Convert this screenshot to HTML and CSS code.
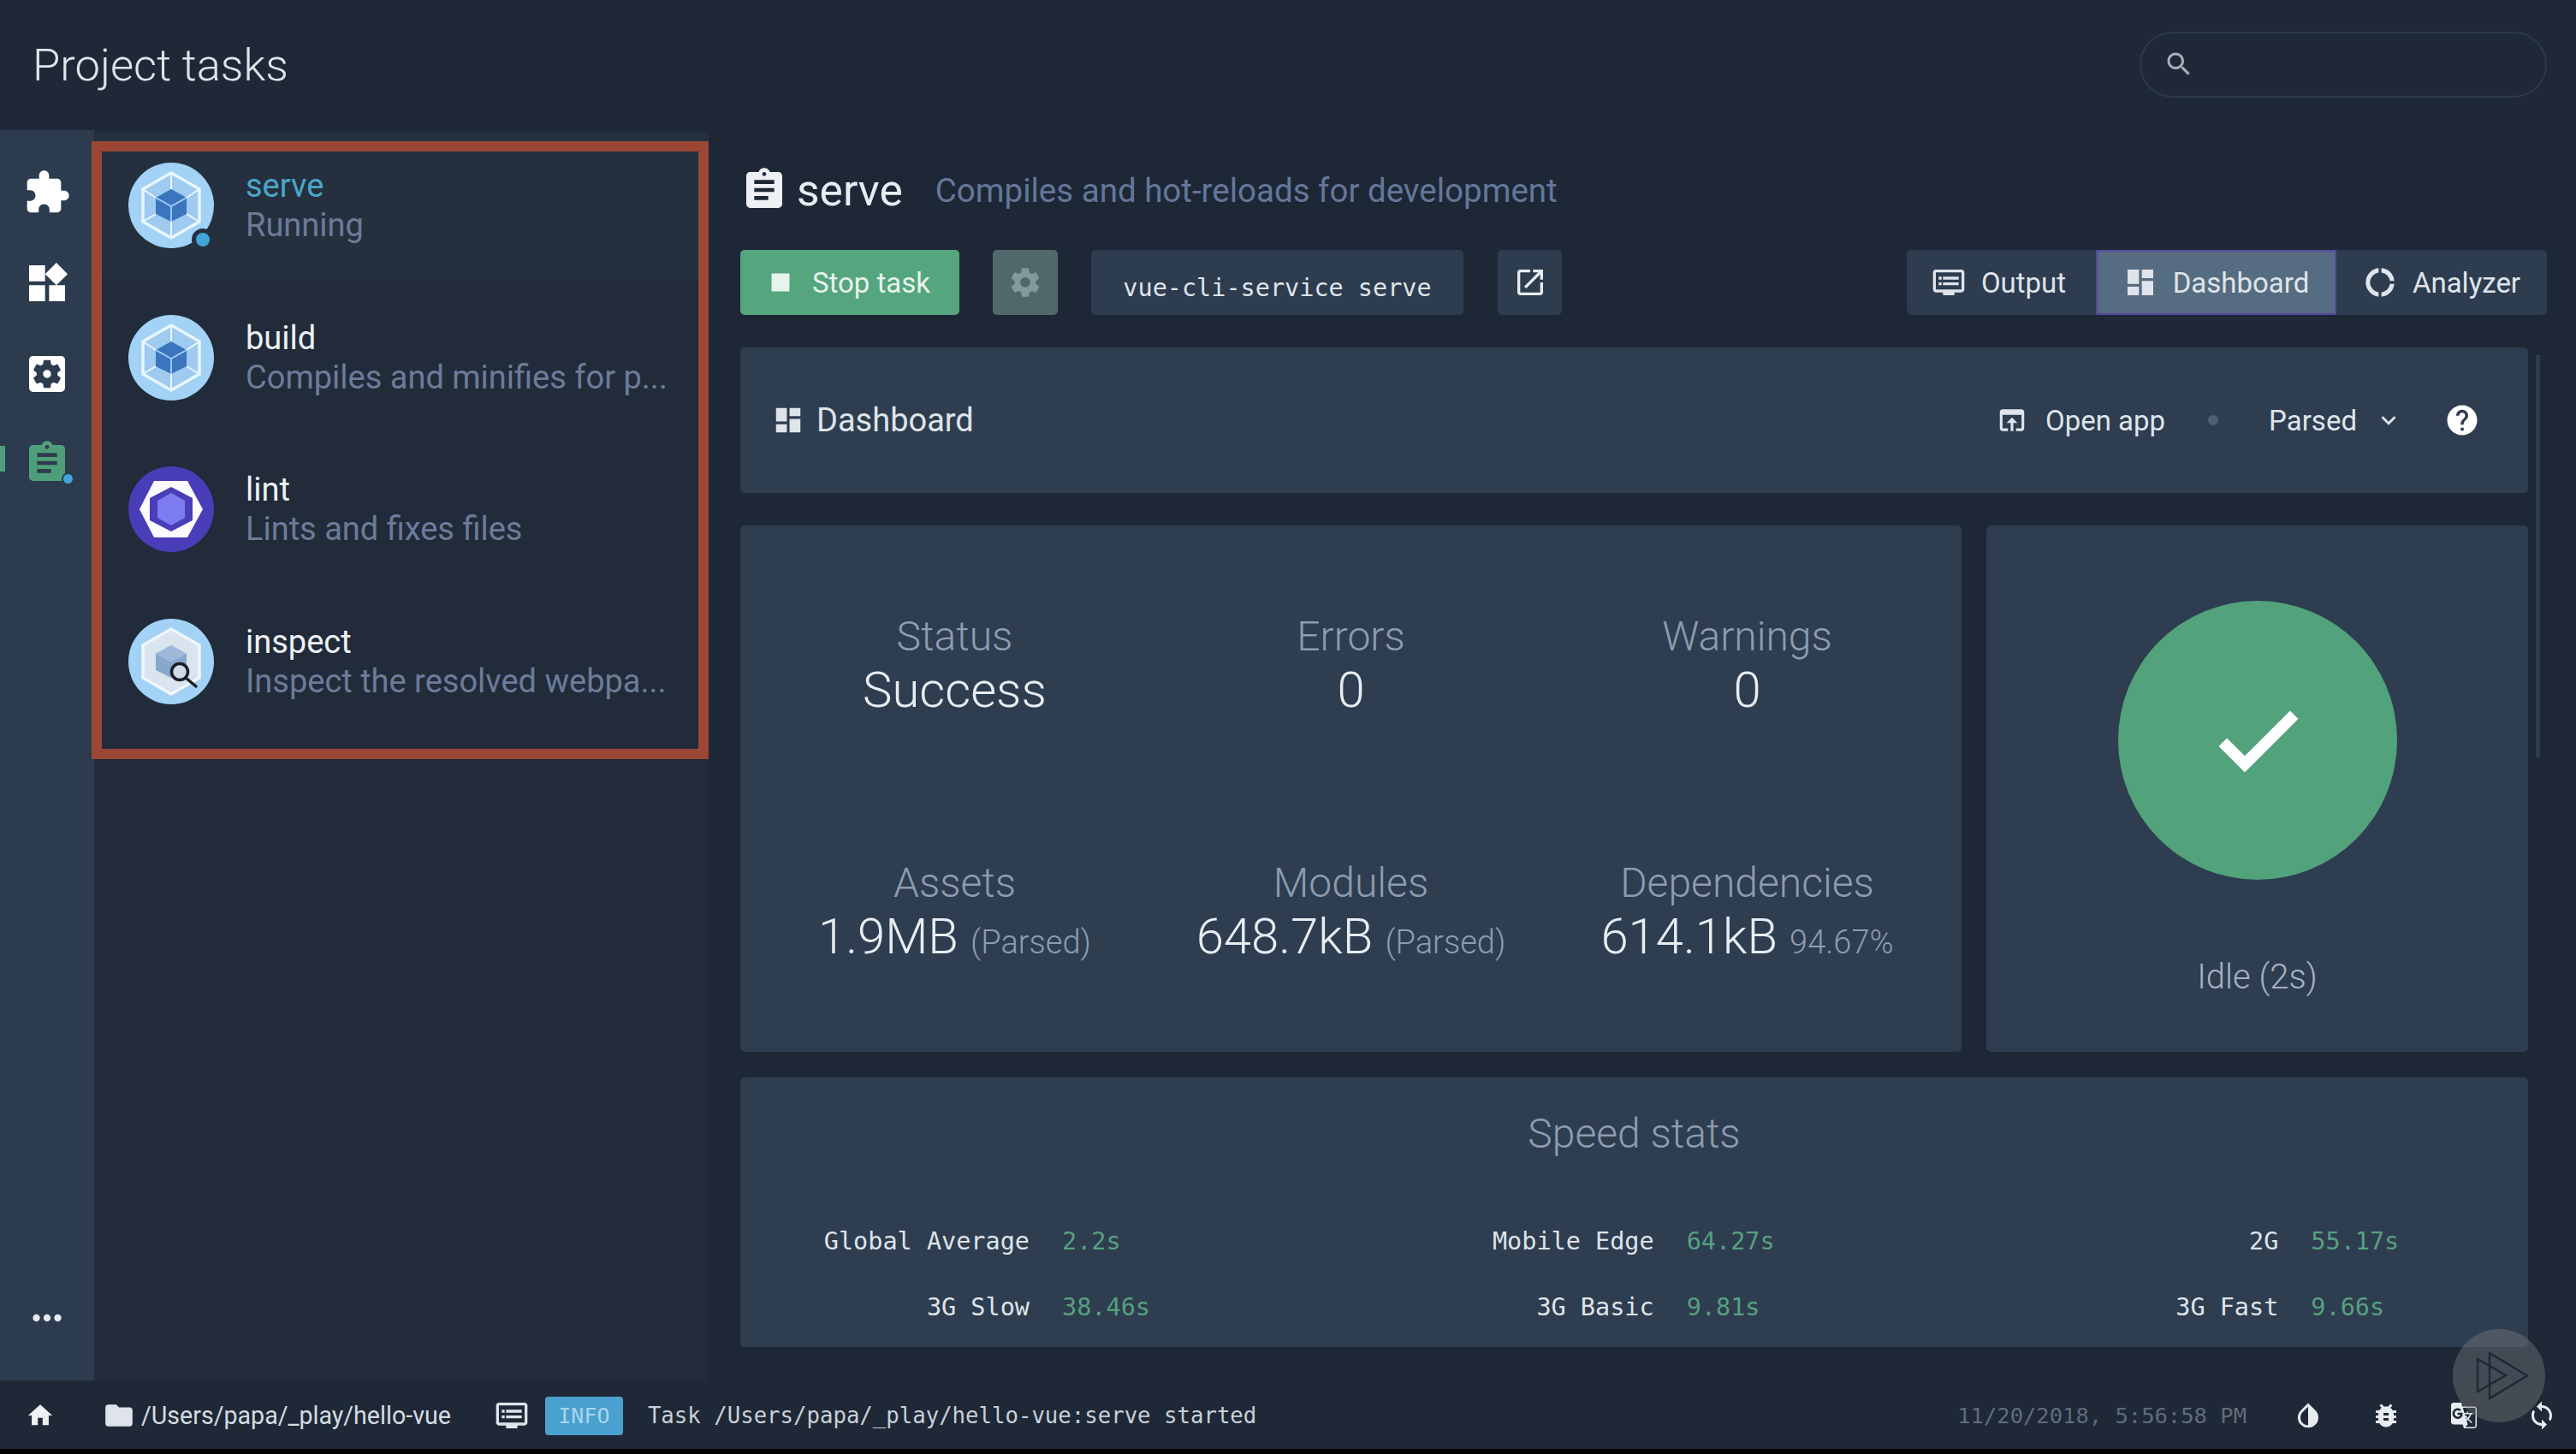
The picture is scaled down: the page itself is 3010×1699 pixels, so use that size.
FILE: index.html
```html
<!DOCTYPE html>
<html lang="en">
<head>
    <meta charset="UTF-8">
    <title>Project tasks</title>
    <link rel="stylesheet" href="styles.css">
</head>
<body>
    <svg class="sprite" xmlns="http://www.w3.org/2000/svg">
        <symbol id="i-extension" viewBox="0 0 24 24"><path d="M20.5 11H19V7c0-1.1-.9-2-2-2h-4V3.5C13 2.12 11.88 1 10.5 1S8 2.12 8 3.5V5H4c-1.1 0-1.99.9-1.99 2v3.8H3.5c1.49 0 2.7 1.21 2.7 2.7s-1.21 2.7-2.7 2.7H2V20c0 1.1.9 2 2 2h3.8v-1.5c0-1.49 1.21-2.7 2.7-2.7 1.49 0 2.7 1.21 2.7 2.7V22H17c1.1 0 2-.9 2-2v-4h1.5c1.38 0 2.5-1.12 2.5-2.5S21.88 11 20.5 11z"/></symbol>
        <symbol id="i-widgets" viewBox="0 0 24 24"><path d="M13 13v8h8v-8h-8zM3 21h8v-8H3v8zM3 3v8h8V3H3zm13.66-1.31L11 7.34 16.66 13l5.66-5.66-5.66-5.65z"/></symbol>
        <symbol id="i-settings-app" viewBox="0 0 24 24"><path d="M12 10c-1.1 0-2 .9-2 2s.9 2 2 2 2-.9 2-2-.9-2-2-2zm7-7H5c-1.11 0-2 .9-2 2v14c0 1.1.89 2 2 2h14c1.11 0 2-.9 2-2V5c0-1.1-.89-2-2-2zm-1.75 9c0 .23-.02.46-.05.68l1.48 1.16c.13.11.17.3.08.45l-1.4 2.42c-.09.15-.27.21-.43.15l-1.74-.7c-.36.28-.76.51-1.18.69l-.26 1.85c-.03.17-.18.3-.35.3h-2.8c-.17 0-.32-.13-.35-.29l-.26-1.85c-.43-.18-.82-.41-1.18-.69l-1.74.7c-.16.06-.34 0-.43-.15l-1.4-2.42c-.09-.15-.05-.34.08-.45l1.48-1.16c-.03-.23-.05-.46-.05-.69 0-.23.02-.46.05-.68l-1.48-1.16c-.13-.11-.17-.3-.08-.45l1.4-2.42c.09-.15.27-.21.43-.15l1.74.7c.36-.28.76-.51 1.18-.69l.26-1.85c.03-.17.18-.3.35-.3h2.8c.17 0 .32.13.35.29l.26 1.85c.43.18.82.41 1.18.69l1.74-.7c.16-.06.34 0 .43.15l1.4 2.42c.09.15.05.34-.08.45l-1.48 1.16c.03.23.05.46.05.69z"/></symbol>
        <symbol id="i-assignment" viewBox="0 0 24 24"><path d="M19 3h-4.18C14.4 1.84 13.3 1 12 1c-1.3 0-2.4.84-2.82 2H5c-1.1 0-2 .9-2 2v14c0 1.1.9 2 2 2h14c1.1 0 2-.9 2-2V5c0-1.1-.9-2-2-2zm-7 0c.55 0 1 .45 1 1s-.45 1-1 1-1-.45-1-1 .45-1 1-1zm2 14H7v-2h7v2zm3-4H7v-2h10v2zm0-4H7V7h10v2z"/></symbol>
        <symbol id="i-dashboard" viewBox="0 0 24 24"><path d="M3 13h8V3H3v10zm0 8h8v-6H3v6zm10 0h8V11h-8v10zm0-18v6h8V3h-8z"/></symbol>
        <symbol id="i-settings" viewBox="0 0 24 24"><path d="M19.43 12.98c.04-.32.07-.64.07-.98s-.03-.66-.07-.98l2.11-1.65c.19-.15.24-.42.12-.64l-2-3.46c-.12-.22-.39-.3-.61-.22l-2.49 1c-.52-.4-1.08-.73-1.69-.98l-.38-2.65C14.46 2.18 14.25 2 14 2h-4c-.25 0-.46.18-.49.42l-.38 2.65c-.61.25-1.17.59-1.69.98l-2.49-1c-.23-.09-.49 0-.61.22l-2 3.46c-.13.22-.07.49.12.64l2.11 1.65c-.04.32-.07.65-.07.98s.03.66.07.98l-2.11 1.65c-.19.15-.24.42-.12.64l2 3.46c.12.22.39.3.61.22l2.49-1c.52.4 1.08.73 1.69.98l.38 2.65c.03.24.24.42.49.42h4c.25 0 .46-.18.49-.42l.38-2.65c.61-.25 1.17-.59 1.69-.98l2.49 1c.23.09.49 0 .61-.22l2-3.46c.12-.22.07-.49-.12-.64l-2.11-1.65zM12 15.5c-1.93 0-3.5-1.57-3.5-3.5s1.57-3.5 3.5-3.5 3.5 1.57 3.5 3.5-1.57 3.5-3.5 3.5z"/></symbol>
        <symbol id="i-open" viewBox="0 0 24 24"><path d="M19 19H5V5h7V3H5c-1.11 0-2 .9-2 2v14c0 1.1.89 2 2 2h14c1.1 0 2-.9 2-2v-7h-2v7zM14 3v2h3.59l-9.83 9.83 1.41 1.41L19 6.41V10h2V3h-7z"/></symbol>
        <symbol id="i-search" viewBox="0 0 24 24"><path d="M15.5 14h-.79l-.28-.27C15.41 12.59 16 11.11 16 9.5 16 5.91 13.09 3 9.5 3S3 5.91 3 9.5 5.91 16 9.5 16c1.61 0 3.09-.59 4.23-1.57l.27.28v.79l5 4.99L20.49 19l-4.99-5zm-6 0C7.01 14 5 11.99 5 9.5S7.01 5 9.5 5 14 7.01 14 9.5 11.99 14 9.5 14z"/></symbol>
        <symbol id="i-browser" viewBox="0 0 24 24"><path d="M19 4H5c-1.11 0-2 .9-2 2v12c0 1.1.89 2 2 2h4v-2H5V8h14v10h-4v2h4c1.1 0 2-.9 2-2V6c0-1.1-.89-2-2-2zm-7 6l-4 4h3v6h2v-6h3l-4-4z"/></symbol>
        <symbol id="i-down" viewBox="0 0 24 24"><path d="M7.41 8.59L12 13.17l4.59-4.58L18 10l-6 6-6-6 1.41-1.41z"/></symbol>
        <symbol id="i-help" viewBox="0 0 24 24"><path d="M12 2C6.48 2 2 6.48 2 12s4.48 10 10 10 10-4.48 10-10S17.52 2 12 2zm1 17h-2v-2h2v2zm2.07-7.75l-.9.92C13.45 12.9 13 13.5 13 15h-2v-.5c0-1.1.45-2.1 1.17-2.83l1.24-1.26c.37-.36.59-.86.59-1.41 0-1.1-.9-2-2-2s-2 .9-2 2H8c0-2.21 1.79-4 4-4s4 1.79 4 4c0 .88-.36 1.68-.93 2.25z"/></symbol>
        <symbol id="i-check" viewBox="0 0 24 24"><path d="M9 16.17L4.83 12l-1.42 1.41L9 19 21 7l-1.41-1.41z"/></symbol>
        <symbol id="i-home" viewBox="0 0 24 24"><path d="M10 20v-6h4v6h5v-8h3L12 3 2 12h3v8z"/></symbol>
        <symbol id="i-folder" viewBox="0 0 24 24"><path d="M10 4H4c-1.1 0-1.99.9-1.99 2L2 18c0 1.1.9 2 2 2h16c1.1 0 2-.9 2-2V8c0-1.1-.9-2-2-2h-8l-2-2z"/></symbol>
        <symbol id="i-more" viewBox="0 0 24 24"><path d="M6 10c-1.1 0-2 .9-2 2s.9 2 2 2 2-.9 2-2-.9-2-2-2zm12 0c-1.1 0-2 .9-2 2s.9 2 2 2 2-.9 2-2-.9-2-2-2zm-6 0c-1.1 0-2 .9-2 2s.9 2 2 2 2-.9 2-2-.9-2-2-2z"/></symbol>
        <symbol id="i-dvr" viewBox="0 0 24 24"><path d="M21 3H3c-1.1 0-2 .9-2 2v12c0 1.1.9 2 2 2h5v2h8v-2h5c1.1 0 1.99-.9 1.99-2L23 5c0-1.1-.9-2-2-2zm0 14H3V5h18v12zm-2-9H8v2h11V8zm0 4H8v2h11v-2zM7 8H5v2h2V8zm0 4H5v2h2v-2z"/></symbol>
        <symbol id="i-donut" viewBox="0 0 24 24"><path d="M11 5.08V2c-5 .5-9 4.81-9 10s4 9.5 9 10v-3.08c-3-.48-6-3.4-6-6.92s3-6.44 6-6.92zM18.97 11H22c-.47-5-4-8.53-9-9v3.08C16 5.51 18.54 8 18.97 11zM13 18.92V22c5-.47 8.53-4 9-9h-3.03c-.43 3-2.97 5.49-5.97 5.92z"/></symbol>
        <symbol id="i-drop" viewBox="0 0 24 24"><path d="M17.66 7.93L12 2.27 6.34 7.93c-3.12 3.12-3.12 8.19 0 11.31C7.9 20.8 9.95 21.58 12 21.58c2.05 0 4.1-.78 5.66-2.34 3.12-3.12 3.12-8.19 0-11.31zM12 19.59c-1.6 0-3.11-.62-4.24-1.76C6.62 16.69 6 15.19 6 13.59s.62-3.11 1.76-4.24L12 5.1v14.49z"/></symbol>
        <symbol id="i-bug" viewBox="0 0 24 24"><path d="M20 8h-2.81c-.45-.78-1.07-1.45-1.82-1.96L17 4.41 15.59 3l-2.17 2.17C12.96 5.06 12.49 5 12 5c-.49 0-.96.06-1.41.17L8.41 3 7 4.41l1.62 1.63C7.88 6.55 7.26 7.22 6.81 8H4v2h2.09c-.05.33-.09.66-.09 1v1H4v2h2v1c0 .34.04.67.09 1H4v2h2.81c1.04 1.79 2.97 3 5.19 3s4.15-1.21 5.19-3H20v-2h-2.09c.05-.33.09-.66.09-1v-1h2v-2h-2v-1c0-.34-.04-.67-.09-1H20V8zm-6 8h-4v-2h4v2zm0-4h-4v-2h4v2z"/></symbol>
        <symbol id="i-translate" viewBox="0 0 24 24"><path d="M20 5h-9.12L10 2H4c-1.1 0-2 .9-2 2v13c0 1.1.9 2 2 2h7l1 3h8c1.1 0 2-.9 2-2V7c0-1.1-.9-2-2-2zM7.17 14.59c-2.25 0-4.09-1.83-4.09-4.09s1.83-4.09 4.09-4.09c1.04 0 1.99.37 2.74 1.07l.07.06-1.23 1.18-.06-.05c-.29-.27-.78-.59-1.52-.59-1.31 0-2.38 1.09-2.38 2.42s1.07 2.42 2.38 2.42c1.37 0 1.96-.87 2.12-1.46H7.08V9.91h3.95l.01.07c.04.21.05.4.05.61 0 2.35-1.61 4-3.92 4zm6.03-1.71c.33.6.74 1.18 1.19 1.7l-.54.53-.65-2.23zm.77-.76h-.99l-.31-1.04h3.99s-.34 1.31-1.56 2.74c-.52-.62-.89-1.23-1.13-1.7zM21 20c0 .55-.45 1-1 1h-7l2-2-.81-2.77.92-.92L17.79 18l.73-.73-2.71-2.68c.9-1.03 1.6-2.25 1.92-3.51H19v-1.04h-3.64V9h-1.04v1.04h-1.96L11.18 6H20c.55 0 1 .45 1 1v13z"/></symbol>
        <symbol id="i-sync" viewBox="0 0 24 24"><path d="M12 4V1L8 5l4 4V6c3.31 0 6 2.69 6 6 0 1.01-.25 1.97-.7 2.8l1.46 1.46C19.54 15.03 20 13.57 20 12c0-4.42-3.58-8-8-8zm0 14c-3.31 0-6-2.69-6-6 0-1.01.25-1.97.7-2.8L5.24 7.74C4.46 8.97 4 10.43 4 12c0 4.42 3.58 8 8 8v3l4-4-4-4v3z"/></symbol>
        <symbol id="i-webpack" viewBox="0 0 100 100">
            <circle cx="50" cy="50" r="50" fill="#a2d2f6"/>
            <path d="M50 12 L83 31 V69 L50 88 L17 69 V31 Z" fill="#9ecbef" stroke="#eaf6fe" stroke-width="3.5"/>
            <path d="M50 12 V31 M83 31 L68 41 M83 69 L68 60 M50 88 V69 M17 69 L32 60 M17 31 L32 41" stroke="#eaf6fe" stroke-width="2"/>
            <path d="M50 31 L68 41 V60 L50 69 L32 60 V41 Z" fill="#3b75bd"/>
            <path d="M32 41 L50 51 L68 41 M50 51 V69" stroke="#a2d2f6" stroke-width="1.8" fill="none"/>
        </symbol>
        <symbol id="i-eslint" viewBox="0 0 100 100">
            <circle cx="50" cy="50" r="50" fill="#4a3db8"/>
            <path d="M30 17 H69 L87 50 L69 83 H30 L13 50 Z" fill="#fbfaff"/>
            <path d="M50 24 L75 37 V63 L50 76 L25 63 V37 Z" fill="#4a3db8"/>
            <path d="M50 31 L66 40 V60 L50 69 L34 60 V40 Z" fill="#7c7cf0"/>
        </symbol>
        <symbol id="i-inspect" viewBox="0 0 100 100">
            <circle cx="50" cy="50" r="50" fill="#a2d2f6"/>
            <path d="M50 12 L83 31 V69 L50 88 L17 69 V31 Z" fill="#d9e4ee" stroke="#f0f7fc" stroke-width="3.5"/>
            <path d="M50 31 L68 41 V60 L50 69 L32 60 V41 Z" fill="#88a7cc"/>
            <path d="M50 31 L68 41 L50 51 L32 41 Z" fill="#9dbad8"/>
            <circle cx="60" cy="62" r="9.5" fill="#cfdae4" stroke="#191e26" stroke-width="3.5"/>
            <path d="M67 69 L79 79" stroke="#191e26" stroke-width="3.5" stroke-linecap="round"/>
        </symbol>
    </svg>

    <header class="top-bar">
        <h1 class="page-title">Project tasks</h1>
        <div class="search-box">
            <svg class="icon search-icon"><use href="#i-search"/></svg>
        </div>
    </header>

    <div class="middle">
        <nav class="side-nav">
            <div class="nav-icons">
                <svg class="icon nav-icon"><use href="#i-extension"/></svg>
                <svg class="icon nav-icon"><use href="#i-widgets"/></svg>
                <svg class="icon nav-icon"><use href="#i-settings-app"/></svg>
                <div class="nav-current">
                    <svg class="icon nav-icon nav-green"><use href="#i-assignment"/></svg>
                    <span class="nav-dot"></span>
                </div>
            </div>
            <svg class="icon nav-more"><use href="#i-more"/></svg>
        </nav>

        <aside class="task-list">
            <div class="task-row task-active">
                <div class="task-avatar">
                    <svg class="avatar-svg"><use href="#i-webpack"/></svg>
                    <span class="avatar-dot"></span>
                </div>
                <div class="task-text">
                    <div class="task-name name-running">serve</div>
                    <div class="task-desc">Running</div>
                </div>
            </div>
            <div class="task-row">
                <div class="task-avatar"><svg class="avatar-svg"><use href="#i-webpack"/></svg></div>
                <div class="task-text">
                    <div class="task-name">build</div>
                    <div class="task-desc">Compiles and minifies for p...</div>
                </div>
            </div>
            <div class="task-row">
                <div class="task-avatar"><svg class="avatar-svg"><use href="#i-eslint"/></svg></div>
                <div class="task-text">
                    <div class="task-name">lint</div>
                    <div class="task-desc">Lints and fixes files</div>
                </div>
            </div>
            <div class="task-row">
                <div class="task-avatar"><svg class="avatar-svg"><use href="#i-inspect"/></svg></div>
                <div class="task-text">
                    <div class="task-name">inspect</div>
                    <div class="task-desc">Inspect the resolved webpa...</div>
                </div>
            </div>
            <div class="red-outline"></div>
        </aside>

        <main class="content">
            <div class="task-head">
                <svg class="icon head-icon"><use href="#i-assignment"/></svg>
                <span class="head-name">serve</span>
                <span class="head-desc">Compiles and hot-reloads for development</span>
            </div>

            <div class="actions">
                <div class="btn btn-green">
                    <svg class="icon stop-icon" viewBox="0 0 24 24"><path d="M6 6h12v12H6z"/></svg>
                    <span>Stop task</span>
                </div>
                <div class="btn btn-gear"><svg class="icon gear-icon"><use href="#i-settings"/></svg></div>
                <div class="btn btn-command">vue-cli-service serve</div>
                <div class="btn btn-square"><svg class="icon link-icon"><use href="#i-open"/></svg></div>
                <div class="tabs">
                    <div class="tab tab-first">
                        <svg class="icon tab-icon"><use href="#i-dvr"/></svg>
                        <span>Output</span>
                    </div>
                    <div class="tab tab-on">
                        <svg class="icon tab-icon"><use href="#i-dashboard"/></svg>
                        <span>Dashboard</span>
                    </div>
                    <div class="tab tab-last">
                        <svg class="icon tab-icon"><use href="#i-donut"/></svg>
                        <span>Analyzer</span>
                    </div>
                </div>
            </div>

            <div class="scroll-area">
                <div class="panels">
                    <section class="panel dash-bar">
                        <div class="dash-title">
                            <svg class="icon dash-icon"><use href="#i-dashboard"/></svg>
                            <span>Dashboard</span>
                        </div>
                        <div class="dash-tools">
                            <svg class="icon tool-icon"><use href="#i-browser"/></svg>
                            <span class="tool-label">Open app</span>
                            <span class="tool-sep"></span>
                            <span class="tool-label">Parsed</span>
                            <svg class="icon chevron"><use href="#i-down"/></svg>
                            <svg class="icon help-icon"><use href="#i-help"/></svg>
                        </div>
                    </section>

                    <div class="stats-row">
                        <section class="panel stats">
                            <div class="stat">
                                <div class="stat-label">Status</div>
                                <div class="stat-value">Success</div>
                            </div>
                            <div class="stat">
                                <div class="stat-label">Errors</div>
                                <div class="stat-value">0</div>
                            </div>
                            <div class="stat">
                                <div class="stat-label">Warnings</div>
                                <div class="stat-value">0</div>
                            </div>
                            <div class="stat">
                                <div class="stat-label">Assets</div>
                                <div class="stat-value">1.9MB <small>(Parsed)</small></div>
                            </div>
                            <div class="stat">
                                <div class="stat-label">Modules</div>
                                <div class="stat-value">648.7kB <small>(Parsed)</small></div>
                            </div>
                            <div class="stat">
                                <div class="stat-label">Dependencies</div>
                                <div class="stat-value">614.1kB <small>94.67%</small></div>
                            </div>
                        </section>
                        <section class="panel idle">
                            <div class="idle-circle"><svg class="icon idle-check"><use href="#i-check"/></svg></div>
                            <div class="idle-text">Idle (2s)</div>
                        </section>
                    </div>

                    <section class="panel speed">
                        <h2 class="speed-title">Speed stats</h2>
                        <div class="speed-grid">
                            <div class="speed-item"><span class="speed-label">Global Average</span><span class="speed-val">2.2s</span></div>
                            <div class="speed-item"><span class="speed-label">Mobile Edge</span><span class="speed-val">64.27s</span></div>
                            <div class="speed-item"><span class="speed-label">2G</span><span class="speed-val">55.17s</span></div>
                            <div class="speed-item"><span class="speed-label">3G Slow</span><span class="speed-val">38.46s</span></div>
                            <div class="speed-item"><span class="speed-label">3G Basic</span><span class="speed-val">9.81s</span></div>
                            <div class="speed-item"><span class="speed-label">3G Fast</span><span class="speed-val">9.66s</span></div>
                        </div>
                    </section>
                </div>
                <div class="scrollbar"></div>
            </div>
        </main>
    </div>

    <footer class="status-bar">
        <svg class="icon bar-home"><use href="#i-home"/></svg>
        <svg class="icon bar-folder"><use href="#i-folder"/></svg>
        <span class="bar-path">/Users/papa/_play/hello-vue</span>
        <svg class="icon bar-dvr"><use href="#i-dvr"/></svg>
        <span class="bar-badge">INFO</span>
        <span class="bar-log">Task /Users/papa/_play/hello-vue:serve started</span>
        <span class="bar-date">11/20/2018, 5:56:58 PM</span>
        <svg class="icon bar-icon"><use href="#i-drop"/></svg>
        <svg class="icon bar-icon"><use href="#i-bug"/></svg>
        <svg class="icon bar-icon"><use href="#i-translate"/></svg>
        <svg class="icon bar-icon"><use href="#i-sync"/></svg>
    </footer>

    <!-- video player badge that sits over the page -->
    <div class="play-badge">
        <svg class="play-svg" viewBox="0 0 70 70"><path d="M10 15 L43 34 L10 53 Z M24 8 L68 34.5 L24 61 Z" fill="none" stroke="#1f2937" stroke-width="2.5"/></svg>
    </div>
</body>
</html>
```

FILE: styles.css
```css
* {
    box-sizing: border-box;
}

html, body {
    margin: 0;
    padding: 0;
    height: 100%;
    background: #000;
}

body {
    width: 3010px;
    height: 1699px;
    display: flex;
    flex-direction: column;
    overflow: hidden;
    position: relative;
    font-family: Roboto, sans-serif;
    color: #e4e9ef;
}

.sprite {
    display: none;
}

.icon {
    fill: currentColor;
    flex: none;
}

/* top bar */
.top-bar {
    height: 152px;
    flex: none;
    background: #1f2836;
    display: flex;
    align-items: center;
    justify-content: space-between;
    padding: 0 34px 0 38px;
}

.page-title {
    margin: 0;
    font-size: 52.5px;
    font-weight: 300;
    color: #dfe4ea;
}

.search-box {
    width: 476px;
    height: 77px;
    margin-bottom: 2px;
    border: 2px solid #2c394a;
    border-radius: 39px;
    display: flex;
    align-items: center;
    padding-left: 26px;
}

.search-icon {
    width: 36px;
    height: 36px;
    color: #a4aeba;
}

/* middle */
.middle {
    height: 1461px;
    flex: none;
    display: flex;
    background: #1d2736;
}

.side-nav {
    width: 110px;
    flex: none;
    background: #2c3b4e;
    display: flex;
    flex-direction: column;
    align-items: center;
    justify-content: space-between;
    padding: 45px 0 48px;
}

.nav-icons {
    display: flex;
    flex-direction: column;
    align-items: center;
    gap: 50px;
}

.nav-icon {
    display: block;
    width: 56px;
    height: 56px;
    color: #fff;
}

.nav-current {
    position: relative;
    top: -2px;
}

.nav-current::before {
    content: "";
    position: absolute;
    left: -27px;
    top: 8px;
    width: 6px;
    height: 30px;
    background: #4f9e79;
}

.nav-green {
    color: #4f9e79;
}

.nav-dot {
    position: absolute;
    right: -4px;
    bottom: 2px;
    width: 15px;
    height: 15px;
    border-radius: 50%;
    background: #42a5d9;
    border: 2px solid #2c3b4e;
}

.nav-more {
    width: 50px;
    height: 50px;
    color: #e6eaef;
}

/* task list */
.task-list {
    width: 718px;
    flex: none;
    background: #212b3a;
    padding-top: 2px;
    position: relative;
}

.task-row {
    height: 177.5px;
    display: flex;
    align-items: center;
    padding-left: 40px;
}

.task-active {
    background: #24303e;
    height: 172px;
    margin-bottom: 3px;
}

.task-avatar {
    position: relative;
    width: 100px;
    height: 100px;
    flex: none;
}

.avatar-svg {
    display: block;
    width: 100px;
    height: 100px;
}

.avatar-dot {
    position: absolute;
    right: 0;
    bottom: -3px;
    width: 26px;
    height: 26px;
    border-radius: 50%;
    background: #42a5d9;
    border: 5px solid #24303e;
}

.task-text {
    margin-left: 37px;
}

.task-name {
    font-size: 38px;
    line-height: 46px;
    color: #eef1f4;
}

.name-running {
    color: #4ba6c9;
}

.task-desc {
    font-size: 38px;
    line-height: 46px;
    color: #6b7c99;
    white-space: nowrap;
}

/* the red rectangle drawn over the list */
.red-outline {
    position: absolute;
    left: -3px;
    top: 13px;
    width: 721px;
    height: 722px;
    border: 12px solid #9c4636;
}

/* content */
.content {
    flex: 1;
    min-width: 0;
    padding: 0 34px 0 37px;
    display: flex;
    flex-direction: column;
}

.task-head {
    height: 140px;
    display: flex;
    align-items: center;
}

.head-icon {
    width: 56px;
    height: 56px;
    color: #eef1f4;
    margin-right: 10px;
}

.head-name {
    font-size: 51.5px;
    color: #e9edf1;
}

.head-desc {
    margin-left: 38px;
    font-size: 38.5px;
    color: #64779a;
}

.actions {
    display: flex;
    height: 76px;
    flex: none;
    align-items: stretch;
}

.btn {
    border-radius: 5px;
    display: flex;
    align-items: center;
    justify-content: center;
    background: #2d3c4f;
}

.btn-green {
    width: 256px;
    padding-right: 8px;
    background: #55a57f;
    color: #e7f3ed;
    font-size: 33px;
    gap: 16px;
}

.stop-icon {
    width: 42px;
    height: 42px;
}

.btn-gear {
    width: 76px;
    margin-left: 39px;
    background: #50686a;
}

.gear-icon {
    width: 40px;
    height: 40px;
    color: #83999a;
}

.btn-command {
    width: 435px;
    margin-left: 39px;
    padding-top: 12px;
    font-family: "DejaVu Sans Mono", "Liberation Mono", monospace;
    font-size: 28.5px;
    color: #dfe4ea;
}

.btn-square {
    width: 75px;
    margin-left: 40px;
}

.link-icon {
    width: 40px;
    height: 40px;
    color: #e8ecf0;
}

.tabs {
    margin-left: auto;
    width: 748px;
    display: flex;
    background: #2d3c4f;
    border-radius: 5px;
    font-size: 33px;
    color: #dfe4ea;
}

.tab {
    display: flex;
    align-items: center;
    justify-content: center;
    gap: 18px;
}

.tab-first {
    width: 221px;
    padding-right: 6px;
}

.tab-on {
    width: 281px;
    background: #566c80;
    border: 2px solid #55489a;
}

.tab-last {
    width: 246px;
}

.tab-icon {
    width: 40px;
    height: 40px;
}

.scroll-area {
    flex: 1;
    min-height: 0;
    margin-top: 38px;
    display: flex;
    gap: 9px;
}

.panels {
    width: 2089px;
    flex: none;
    display: flex;
    flex-direction: column;
}

.panel {
    background: #2e3d50;
    border-radius: 5px;
}

.scrollbar {
    width: 5px;
    height: 470px;
    margin-top: 9px;
    background: #2d3c4f;
}

.dash-bar {
    height: 170px;
    flex: none;
    display: flex;
    align-items: center;
    justify-content: space-between;
    padding: 0 56px 0 37px;
}

.dash-title {
    display: flex;
    align-items: center;
    gap: 14px;
    font-size: 38px;
    color: #dfe4ea;
}

.dash-icon {
    width: 38px;
    height: 38px;
}

.dash-tools {
    display: flex;
    align-items: center;
    font-size: 33px;
    color: #dfe4ea;
}

.tool-icon {
    width: 38px;
    height: 38px;
    margin-right: 20px;
}

.tool-sep {
    width: 12px;
    height: 12px;
    border-radius: 50%;
    background: #4f5f73;
    margin: 0 59px 0 50px;
}

.chevron {
    width: 34px;
    height: 34px;
    margin-left: 20px;
}

.help-icon {
    width: 42px;
    height: 42px;
    margin-left: 48px;
    color: #fff;
}

.stats-row {
    height: 615px;
    flex: none;
    margin-top: 38px;
    display: flex;
    gap: 29px;
}

.stats {
    width: 1427px;
    flex: none;
    display: grid;
    grid-template-columns: repeat(3, 1fr);
    grid-template-rows: 291px 291px;
    align-content: center;
    padding: 0 19px;
    text-align: center;
}

.stat {
    align-self: center;
}

.stat-label {
    font-size: 48px;
    font-weight: 300;
    line-height: 60px;
    color: #8d9cb0;
}

.stat-value {
    font-size: 58px;
    font-weight: 300;
    line-height: 64px;
    color: #e9edf1;
    white-space: nowrap;
}

.stat-value small {
    font-size: 38px;
    color: #8d9cb0;
}

.idle {
    flex: 1;
    display: flex;
    flex-direction: column;
    align-items: center;
    padding-top: 88px;
}

.idle-circle {
    width: 326px;
    height: 326px;
    border-radius: 50%;
    background: #52a27c;
    display: flex;
    align-items: center;
    justify-content: center;
}

.idle-check {
    width: 120px;
    height: 120px;
    color: #fff;
    stroke: #fff;
    stroke-width: 0.7px;
}

.idle-text {
    margin-top: 90px;
    font-size: 40px;
    font-weight: 300;
    color: #a6b2c2;
}

.speed {
    height: 315px;
    flex: none;
    margin-top: 30px;
    padding: 36px 20px 0;
}

.speed-title {
    margin: 0 0 78px;
    font-size: 48px;
    font-weight: 300;
    line-height: 60px;
    text-align: center;
    color: #8d9cb0;
}

.speed-grid {
    display: grid;
    grid-template-columns: repeat(3, 1fr);
    column-gap: 140px;
    row-gap: 41px;
    font-family: "DejaVu Sans Mono", "Liberation Mono", monospace;
    font-size: 28.5px;
    line-height: 36px;
    white-space: pre;
}

.speed-label {
    display: inline-block;
    width: 318px;
    text-align: right;
    color: #dfe4ea;
}

.speed-val {
    margin-left: 38px;
    color: #56a07f;
}

/* status bar */
.status-bar {
    height: 80px;
    flex: none;
    background: #1f2836;
    display: flex;
    align-items: center;
    padding: 2px 22px 0 30px;
    font-size: 28.6px;
    color: #d5dbe2;
}

.bar-home {
    width: 34px;
    height: 34px;
    color: #eef1f4;
}

.bar-folder {
    width: 38px;
    height: 38px;
    margin-left: 56px;
    color: #dfe4ea;
}

.bar-path {
    margin-left: 7px;
}

.bar-dvr {
    width: 40px;
    height: 40px;
    margin-left: 51px;
    color: #dfe4ea;
}

.bar-badge {
    width: 91px;
    height: 45px;
    margin-left: 19px;
    border-radius: 4px;
    background: #4aa0cf;
    color: #a9d5ec;
    font-family: "DejaVu Sans Mono", monospace;
    font-size: 25px;
    line-height: 45px;
    text-align: center;
}

.bar-log {
    margin-left: 29px;
    font-family: "DejaVu Sans Mono", monospace;
    font-size: 25.7px;
    color: #c9d0d8;
}

.bar-date {
    margin-left: auto;
    font-family: "DejaVu Sans Mono", monospace;
    font-size: 25.5px;
    color: #5f6c7c;
}

.bar-icon {
    width: 36px;
    height: 36px;
    margin-left: 55px;
    color: #e8ecf0;
}

.bar-date + .bar-icon {
    margin-left: 54px;
}

/* overlay: video player badge */
.play-badge {
    position: absolute;
    left: 2866px;
    top: 1553px;
    width: 108px;
    height: 109px;
    border-radius: 50%;
    background: rgba(128, 128, 128, 0.4);
    display: flex;
    align-items: center;
    justify-content: center;
}

.play-svg {
    width: 70px;
    height: 70px;
}
```
